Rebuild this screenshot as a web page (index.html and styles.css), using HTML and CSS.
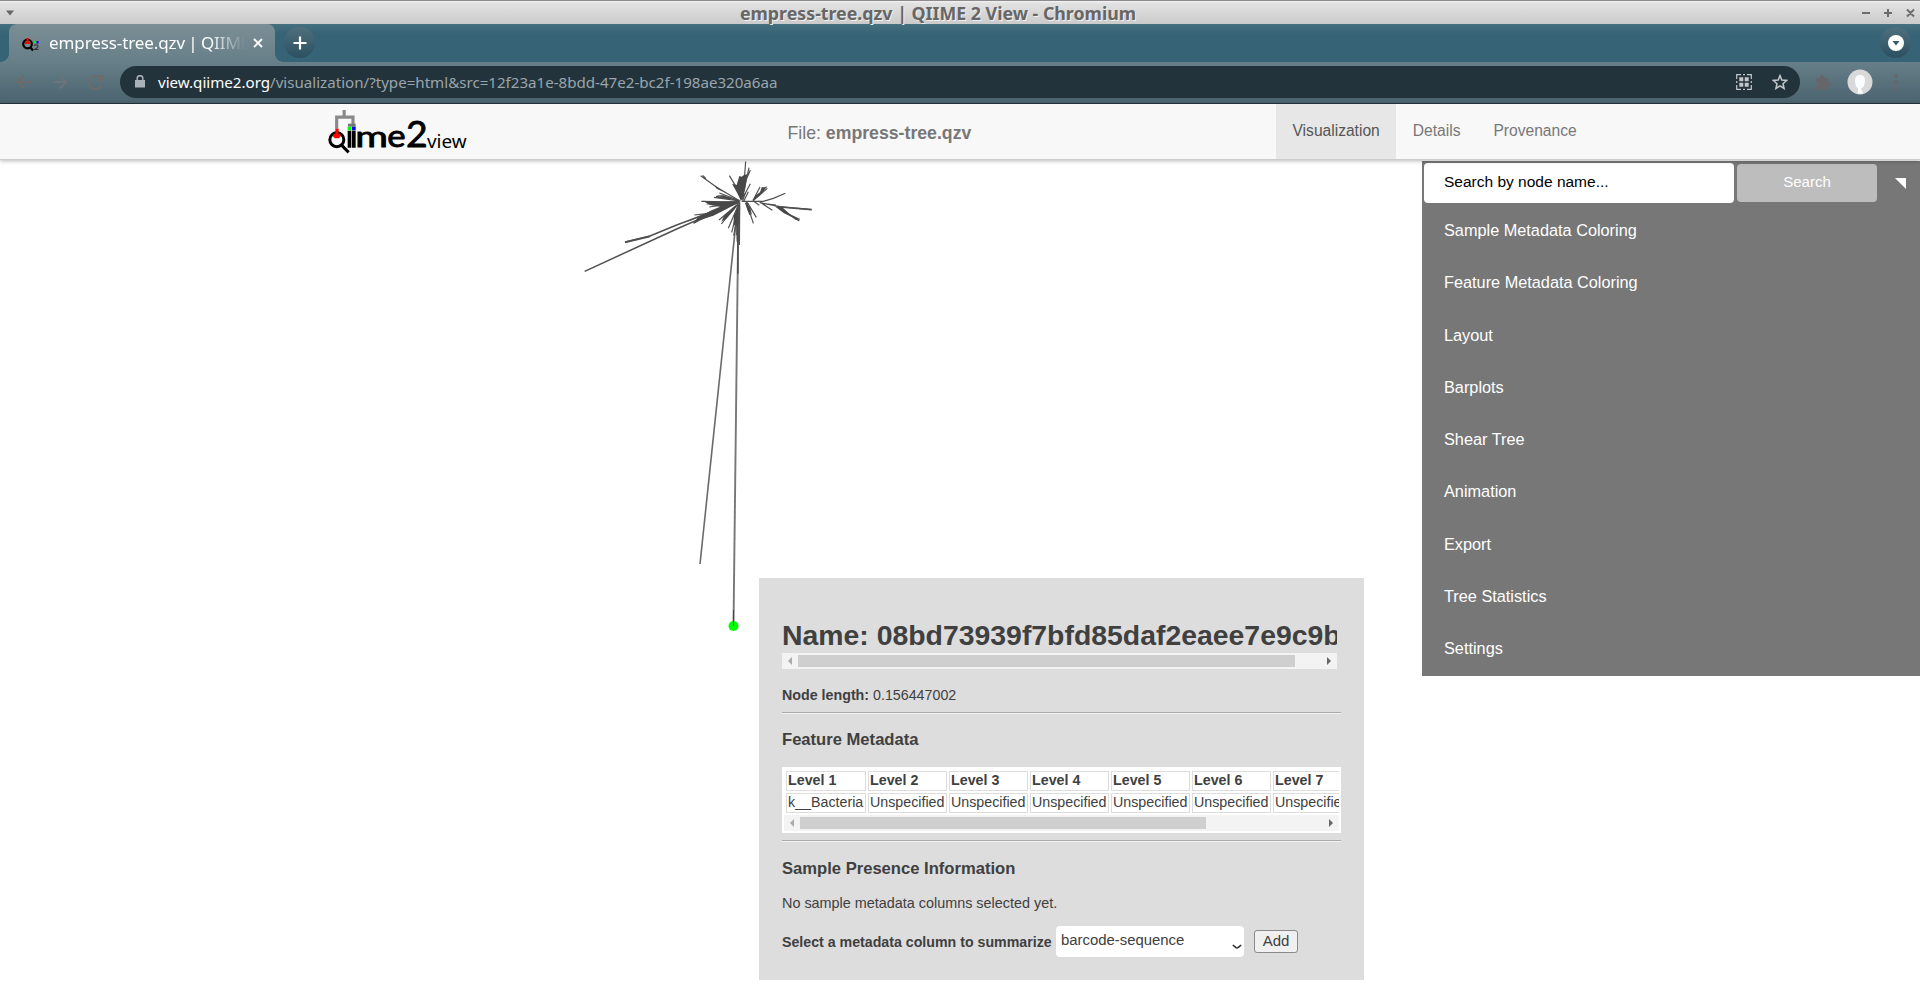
FILE: index.html
```html
<!DOCTYPE html>
<html lang="en">
<head>
<meta charset="utf-8">
<title>empress-tree.qzv | QIIME 2 View</title>
<link rel="stylesheet" href="styles.css">
</head>
<body>
<div class="titlebar">
  <svg class="wm-menu" width="8" height="6" viewBox="0 0 8 6"><path d="M0 .5h8L4 5.500z"/></svg>
  <span class="wm-title">empress-tree.qzv | QIIME 2 View - Chromium</span>
  <svg class="wm-buttons" width="54" height="10" viewBox="0 0 54 10"><path d="M0 5h8M22 5h8M26 1v8M45 1.500l7 7M52 1.500l-7 7"/></svg>
</div>
<div class="tabstrip">
  <div class="tab">
    <svg class="favicon" width="18" height="18" viewBox="0 0 18 18">
      <path d="M5 6V3.500h9V6M9.500 1v2" fill="none" stroke="#8b8080" stroke-width="1"/>
      <circle cx="5.500" cy="10" r="4.300" fill="#7a8b92" stroke="#000" stroke-width="2.200"/>
      <path d="M2.800 9a2.800 2.800 0 0 1 5.400 0v1H2.800zM4.500 4h2v3h-2z" fill="#f00"/>
      <path d="M8 13l3 3.500" stroke="#000" stroke-width="2.200"/>
      <path d="M12 7h2v2h-2z" fill="#0f0"/><path d="M14.500 7h2v2.500h-2z" fill="#00f"/>
      <path d="M12 11.500q2-1.500 3.500 0t-3 4h4" fill="none" stroke="#333" stroke-width="1.200"/>
    </svg>
    <span class="tab-title">empress-tree.qzv | QIIME</span>
    <svg class="tab-close" width="10" height="10" viewBox="0 0 10 10"><path d="M1 1l8 8M9 1l-8 8"/></svg>
  </div>
  <div class="round-btn"><svg width="14" height="14" viewBox="0 0 14 14"><path d="M7 .5v13M.5 7h13" stroke="#fff" stroke-width="2.200"/></svg></div>
  <div class="round-btn tab-search"><svg width="16" height="16" viewBox="0 0 16 16"><circle cx="8" cy="8" r="8" fill="#fff"/><path d="M4.500 6h7L8 10.500z" fill="#355b6c"/></svg></div>
</div>
<div class="toolbar">
  <svg class="nav-icons" width="90" height="16" viewBox="0 0 90 16">
    <path d="M15 8H2M8 1.500L1.500 8 8 14.500" stroke="#6f6b6b"/>
    <path d="M37 8h13M44 1.500L50.500 8 44 14.500" stroke="#6a747a"/>
    <path d="M85.500 11A6.600 6.600 0 1 1 84 3.500L86 5.500M86.200 1v5h-5" stroke="#6f6b6b"/>
  </svg>
  <div class="omnibox">
    <svg width="10" height="13" viewBox="0 0 10 13"><path d="M0 5h10v7.500H0z" fill="#a9b0b8"/><path d="M2.200 5.500V3.500a2.800 2.800 0 0 1 5.600 0v2" fill="none" stroke="#a9b0b8" stroke-width="1.500"/></svg>
    <span class="url"><b>view.qiime2.org</b>/visualization/?type=html&amp;src=12f23a1e-8bdd-47e2-bc2f-198ae320a6aa</span>
    <svg class="qr" width="16" height="16" viewBox="0 0 16 16"><path d="M.7 5V.7H5M7 .7h2M11 .7h4.300V5M15.300 7v2M15.300 11v4.300H11M9 15.300H7M5 15.300H.7V11M.7 9V7" fill="none" stroke="#c3c7ca" stroke-width="1.200"/><path d="M3.300 3.300h4v4h-4zM8.700 3.300h4v4h-4zM3.300 8.700h4v4h-4zM8.700 8.700h4v4h-4z" fill="#c3c7ca"/></svg>
    <svg width="16" height="16" viewBox="0 0 16 16"><path d="M8 1.600l1.800 4.500 4.900.4-3.700 3.200 1.100 4.800L8 11.900l-4.100 2.600L5 9.700 1.300 6.500l4.900-.4z" fill="none" stroke="#c3c7ca" stroke-width="1.500"/></svg>
  </div>
  <svg class="puzzle" width="16" height="16" viewBox="0 0 16 16"><path d="M1 4h4a2.200 2.200 0 1 1 4 0h4v4a2.200 2.200 0 1 1 0 4v4H9.500a2 2 0 1 0-4 0H1v-4a2 2 0 1 0 0-4z" fill="#66666a"/></svg>
  <svg class="avatar" width="26" height="26" viewBox="0 0 26 26"><circle cx="13" cy="13" r="12.500" fill="#d9d9d9"/><path d="M8 11q0-5 5-5t5 5q0 7-4 8.500l2 5h-5l0-5q-3-2-3-8.500z" fill="#fbfcff"/></svg>
  <svg class="dots" width="4" height="16" viewBox="0 0 4 16"><g fill="#66666a"><circle cx="2" cy="2" r="1.800"/><circle cx="2" cy="8" r="1.800"/><circle cx="2" cy="14" r="1.800"/></g></svg>
</div>
<header class="site-nav">
  <svg class="logo" width="142" height="46" viewBox="52 24 426 138">
    <path d="M81 86V51.500h49V76M103.500 30v22" fill="none" stroke="#8a8a8a" stroke-width="9.500"/>
    <path d="M115 71h23v9h-23z" fill="#777"/>
    <path d="M77 86h10v13H77z" fill="#f00"/>
    <circle cx="81.500" cy="119" r="21" fill="#f8f8f8" stroke="#000" stroke-width="9"/>
    <path d="M77 93h9v8h5q3 4 1 10l-5 4H76l-5-4q-2-6 1-10h5z" fill="#f00"/>
    <path d="M97 137l20 20" stroke="#000" stroke-width="9"/>
    <path d="M114 80h11v11h-11z" fill="#0f0"/><path d="M127 80h11v11h-11z" fill="#00f"/>
    <path d="M114 92h11v51h-11zM127 92h11v51h-11z"/>
    <text class="logo-main" x="137" y="142" font-size="88" textLength="98" lengthAdjust="spacingAndGlyphs">m</text>
    <text class="logo-main" x="233" y="142" font-size="90" textLength="55" lengthAdjust="spacingAndGlyphs">e</text>
    <text class="logo-main" x="289" y="142" font-size="112" textLength="65" lengthAdjust="spacingAndGlyphs">2</text>
    <text class="logo-view" x="352" y="143" font-size="56" textLength="119" lengthAdjust="spacingAndGlyphs">view</text>
  </svg>
  <div class="file">File: <b>empress-tree.qzv</b></div>
  <nav class="nav-tabs"><a class="active">Visualization</a><a>Details</a><a>Provenance</a></nav>
</header>
<main class="stage">
  <svg class="tree" width="1920" height="829" viewBox="0 161 1920 829">
    <g fill="none" stroke="#6a6a6a" stroke-width="1.600"><path d="M738 203L700 564"/><path d="M738.500 203L733.500 626" stroke-width="1.900" stroke="#777"/></g>
    <circle cx="733.500" cy="626" r="5" fill="#0f0"/><path d="M733.500 610v16" stroke="#444"/>
    <g transform="translate(560 155) scale(.33333)">
      <g fill="none" stroke="#505050" stroke-width="3.500">
        <path d="M74 349L350 222L538 140M195 261L270 243L350 210L538 140" stroke-width="4.500"/>
        <path d="M195 262L270 244" stroke-width="5"/>
        <path d="M422 62L470 97L541 139M428 61L438 71M508 62L530 98M557 20L550 110M567 38L548 125M571 45L556 80M571 86L545 135"/>
        <path d="M462 127L538 138M478 114L538 137M468 124L510 130M424 139L538 141M440 147L538 141M448 156L538 142M455 170L538 142M458 178L538 142"/>
        <path d="M545 139H610L640 130L676 115M565 110L552 137M556 114L548 137M620 95L578 136M622 100L580 137M600 96L580 134"/>
        <path d="M580 138L598 151M595 138L637 166M600 143L660 155L755 164M650 153L718 198M660 158L708 193L720 192M612 146L648 150"/>
        <path d="M660 156L755 164" stroke-width="5"/>
        <path d="M559 140L580 205M562 142L589 187M556 143L570 180M535 145L484 207M530 150L477 195M535 150L505 220M536 150L515 232M536 160L521 242M539 160L530 240"/>
        <path d="M400 205L470 170M403 180L440 176M384 198L490 155"/>
        <path d="M539 142L538 270" stroke-width="4"/><path d="M533.500 260V356" stroke-width="5"/>
      </g>
      <g fill="#484848">
        <path d="M516 86L530 90L538 63L545 65L552 60L562 58L556 100L549 125L543 138L532 115z"/>
        <path d="M428 137L470 140L538 138L500 162L460 182L420 195L402 206L412 188L455 166L480 155L450 150z"/>
        <path d="M470 121L490 121L538 138L500 132z"/>
        <path d="M462 90L490 109L505 117L470 101z"/>
        <path d="M535 147L524 163L498 192L484 200L492 182z"/>
        <path d="M535 155L536 260H530L528 205L520 215L522 180z"/>
        <path d="M558 144L571 158L576 180L563 166z"/>
        <path d="M580 136L588 120L600 112L605 97L618 97L607 114L594 125z"/>
        <path d="M644 154L666 156L690 178L716 190L714 196L700 188L672 175z"/>
      </g>
    </g>
  </svg>

  <section class="node-menu">
    <div class="node-name">
      <h1>Name: 08bd73939f7bfd85daf2eaee7e9c9b</h1>
      <div class="scrollbar"><i class="arrow left"></i><i class="thumb name-thumb"></i><i class="arrow right"></i></div>
    </div>
    <p class="node-length"><b>Node length:</b> 0.156447002</p>
    <hr>
    <h2 class="h-feature">Feature Metadata</h2>
    <div class="table-wrap">
      <div class="table-clip">
        <table>
          <tr><th class="first">Level 1</th><th>Level 2</th><th>Level 3</th><th>Level 4</th><th>Level 5</th><th>Level 6</th><th>Level 7</th></tr>
          <tr><td>k__Bacteria</td><td>Unspecified</td><td>Unspecified</td><td>Unspecified</td><td>Unspecified</td><td>Unspecified</td><td>Unspecified</td></tr>
        </table>
      </div>
      <div class="scrollbar"><i class="arrow left"></i><i class="thumb table-thumb"></i><i class="arrow right"></i></div>
    </div>
    <hr>
    <h2 class="h-sample">Sample Presence Information</h2>
    <p class="no-sample">No sample metadata columns selected yet.</p>
    <div class="summary-row">
      <b>Select a metadata column to summarize</b>
      <div class="select"><span>barcode-sequence</span><svg width="10" height="6" viewBox="0 0 10 6"><path d="M.8 1L4 3.600Q5 4.200 6 3.600L9.200 1" fill="none" stroke="#222" stroke-width="1.500"/></svg></div>
      <div class="add">Add</div>
    </div>
  </section>

  <aside class="side-panel">
    <div class="search-row">
      <div class="search-input">Search by node name...</div>
      <div class="search-btn">Search</div>
      <svg width="11" height="11" viewBox="0 0 11 11"><path d="M0 0h11v11z" fill="#fff"/></svg>
    </div>
    <div class="item">Sample Metadata Coloring</div>
    <div class="item">Feature Metadata Coloring</div>
    <div class="item">Layout</div>
    <div class="item">Barplots</div>
    <div class="item">Shear Tree</div>
    <div class="item">Animation</div>
    <div class="item">Export</div>
    <div class="item">Tree Statistics</div>
    <div class="item">Settings</div>
  </aside>
</main>
</body>
</html>
```
FILE: styles.css
```css
* { box-sizing: border-box; }
body { margin: 0; width: 1920px; height: 990px; overflow: hidden; background: #fff; font-family: "Liberation Sans", Arial, sans-serif; }
svg { display: block; flex: none; }
h1, h2, p { margin: 0; }

.titlebar { height: 24px; display: flex; align-items: center; justify-content: space-between; padding: 0 6px; border-top: 1px solid #8e8a8e; background: linear-gradient(#f4f4f4 0, #e2e2e2 2px, #cbcbcb); }
.wm-menu { fill: #666; margin-right: 2px; }
.wm-title { font: bold 17.800px/22px "Noto Sans", sans-serif; color: #666; text-shadow: 1px 1px 0 #f0f0f0; white-space: nowrap; }
.wm-buttons { fill: none; stroke: #6c6c6c; stroke-width: 2; position: relative; left: 2px; }

.tabstrip { height: 38px; display: flex; align-items: flex-start; padding: 0 9px; background: linear-gradient(#44707f, #376376 10px, #376376); }
.tab { position: relative; width: 266px; height: 38px; border-radius: 8px 8px 0 0; background: linear-gradient(#7b8e95, #677f88); display: flex; align-items: center; padding: 0 12px 0 13px; }
.tab::before, .tab::after { content: ""; position: absolute; bottom: 0; width: 8px; height: 8px; }
.tab::before { left: -8px; background: radial-gradient(circle at 0 0, transparent 7.5px, #677f88 8px); }
.tab::after { right: -8px; background: radial-gradient(circle at 100% 0, transparent 7.5px, #677f88 8px); }
.tab-title { flex: none; width: 196px; margin-left: 9px; overflow: hidden; white-space: nowrap; font: 17px/26px "Noto Sans", sans-serif; letter-spacing: -.1px; word-spacing: -1px; color: #fff; -webkit-mask-image: linear-gradient(90deg, #000 160px, transparent 196px); mask-image: linear-gradient(90deg, #000 160px, transparent 196px); }
.tab-close { stroke: #fff; stroke-width: 1.8; margin-left: 8px; }
.round-btn { width: 31px; height: 31px; margin: 3px 0 0 9px; border-radius: 50%; background: linear-gradient(#4f6f7d, #2b5061); display: flex; align-items: center; justify-content: center; }
.tab-search { margin-left: auto; }

.toolbar { height: 42px; display: flex; align-items: center; padding: 0 22px 2px 16px; border-bottom: 1px solid #23333c; background: linear-gradient(#677f88, #4a636f); }
.nav-icons { fill: none; stroke-width: 1.9; }
.omnibox { width: 1681px; height: 32px; margin-left: 14px; border-radius: 16px; background: #23333c; display: flex; align-items: center; padding: 0 12px 0 15px; }
.url { margin-left: 13px; font: 15.120px/22px "Noto Sans", sans-serif; color: #9aa5ab; white-space: nowrap; }
.url b { font-weight: 400; color: #fff; }
.qr { margin-left: auto; margin-right: 20px; }
.puzzle { margin-left: 15px; }
.avatar { margin-left: 16px; }
.dots { margin-left: 21px; }

.site-nav { position: relative; z-index: 2; height: 56px; display: flex; background: #f8f8f8; border-bottom: 1px solid #ccc; box-shadow: 0 1px 4px rgba(0,0,0,.28); padding-left: 327px; }
.logo { margin-top: 4px; }
.logo-main { font-family: "Lato", sans-serif; font-weight: 400; stroke: #000; stroke-width: 2.5; }
.logo-view { font-family: "Noto Sans", sans-serif; }
.file { width: 488px; margin-left: 318.500px; font-size: 17.700px; line-height: 20px; padding-top: 19px; color: #777; white-space: nowrap; }
.nav-tabs { display: flex; margin-left: .500px; font-size: 15.600px; line-height: 20px; color: #777; }
.nav-tabs a { padding: 17px 16.500px 18px; }
.nav-tabs .active { color: #555; background: #e7e7e7; }

.stage { position: relative; height: 830px; padding-top: 1px; }
.side-panel { position: absolute; left: 1422px; top: 1px; width: 498px; height: 515px; background: #777; color: #fff; }
.search-row { display: flex; align-items: center; height: 44px; padding: 0 14px 0 2px; font-size: 15.500px; }
.search-input { width: 310px; height: 40px; padding: 0 20px; line-height: 37px; background: #fff; color: #000; border-radius: 4px; }
.search-btn { width: 140px; height: 38px; margin: 0 18px 0 3px; border-radius: 4px; background: #bdbdbd; text-align: center; font-size: 15px; line-height: 36px; }
.item { height: 52.300px; padding-left: 22px; font-size: 16.300px; line-height: 50px; }

.node-menu { position: absolute; left: 759px; top: 418px; width: 605px; height: 402px; background: #ddd; color: #404040; padding: 40px 23px 0; font-size: 14.250px; }
.node-name { width: 555px; }
.node-name h1 { font-size: 28.400px; line-height: 34px; margin-bottom: 1px; overflow: hidden; white-space: nowrap; }
.scrollbar { height: 16px; display: flex; align-items: center; background: #f3f3f3; padding: 0 6px; }
.arrow { border: 4px solid transparent; flex: none; width: 4px; height: 8px; }
.arrow.left { border-width: 4px 4px 4px 0; border-right-color: #aaa; }
.arrow.right { border-width: 4px 0 4px 4px; border-left-color: #666; margin-left: auto; }
.thumb { height: 12px; background: #cfcfcf; margin-left: 6px; }
.name-thumb { width: 497px; }
.table-thumb { width: 406px; }
.node-length { margin-top: 17px; line-height: 18px; }
hr { margin: 8px 0 0; height: 2px; border: 0; border-top: 1px solid #aaa; border-bottom: 1px solid #f4f4f4; }
h2 { font-size: 16.600px; line-height: 20px; }
.h-feature { margin-top: 16px; }
.table-wrap { margin-top: 17px; width: 559px; height: 66px; padding: 2px; background: #fff; }
.table-clip { overflow: hidden; height: 46px; }
.table-wrap + hr { margin-top: 7px; }
table { width: 570px; table-layout: fixed; border-collapse: separate; border-spacing: 2px; font-size: 14.250px; }
th, td { width: 79px; height: 20px; padding: 0 1px 1px; border: 1px solid #ddd; text-align: left; line-height: 17px; white-space: nowrap; }
.first { width: 80px; }
.h-sample { margin-top: 17px; }
.no-sample { margin-top: 15px; font-size: 14.400px; line-height: 18px; }
.summary-row { display: flex; align-items: flex-start; margin-top: 14px; line-height: 32px; white-space: nowrap; }
.summary-row b { width: 274px; font-size: 14.200px; }
.select { width: 188px; height: 31px; border-radius: 4px; background: #fff; padding: 0 2px 0 5px; display: flex; justify-content: space-between; line-height: 29px; font-size: 14.900px; }
.select svg { margin-top: 18px; }
.add { width: 44px; height: 23px; margin: 4px 0 0 10px; border: 1px solid #8a8a8a; border-radius: 3px; background: #f0f0f0; text-align: center; font-size: 15px; line-height: 20px; }
```
